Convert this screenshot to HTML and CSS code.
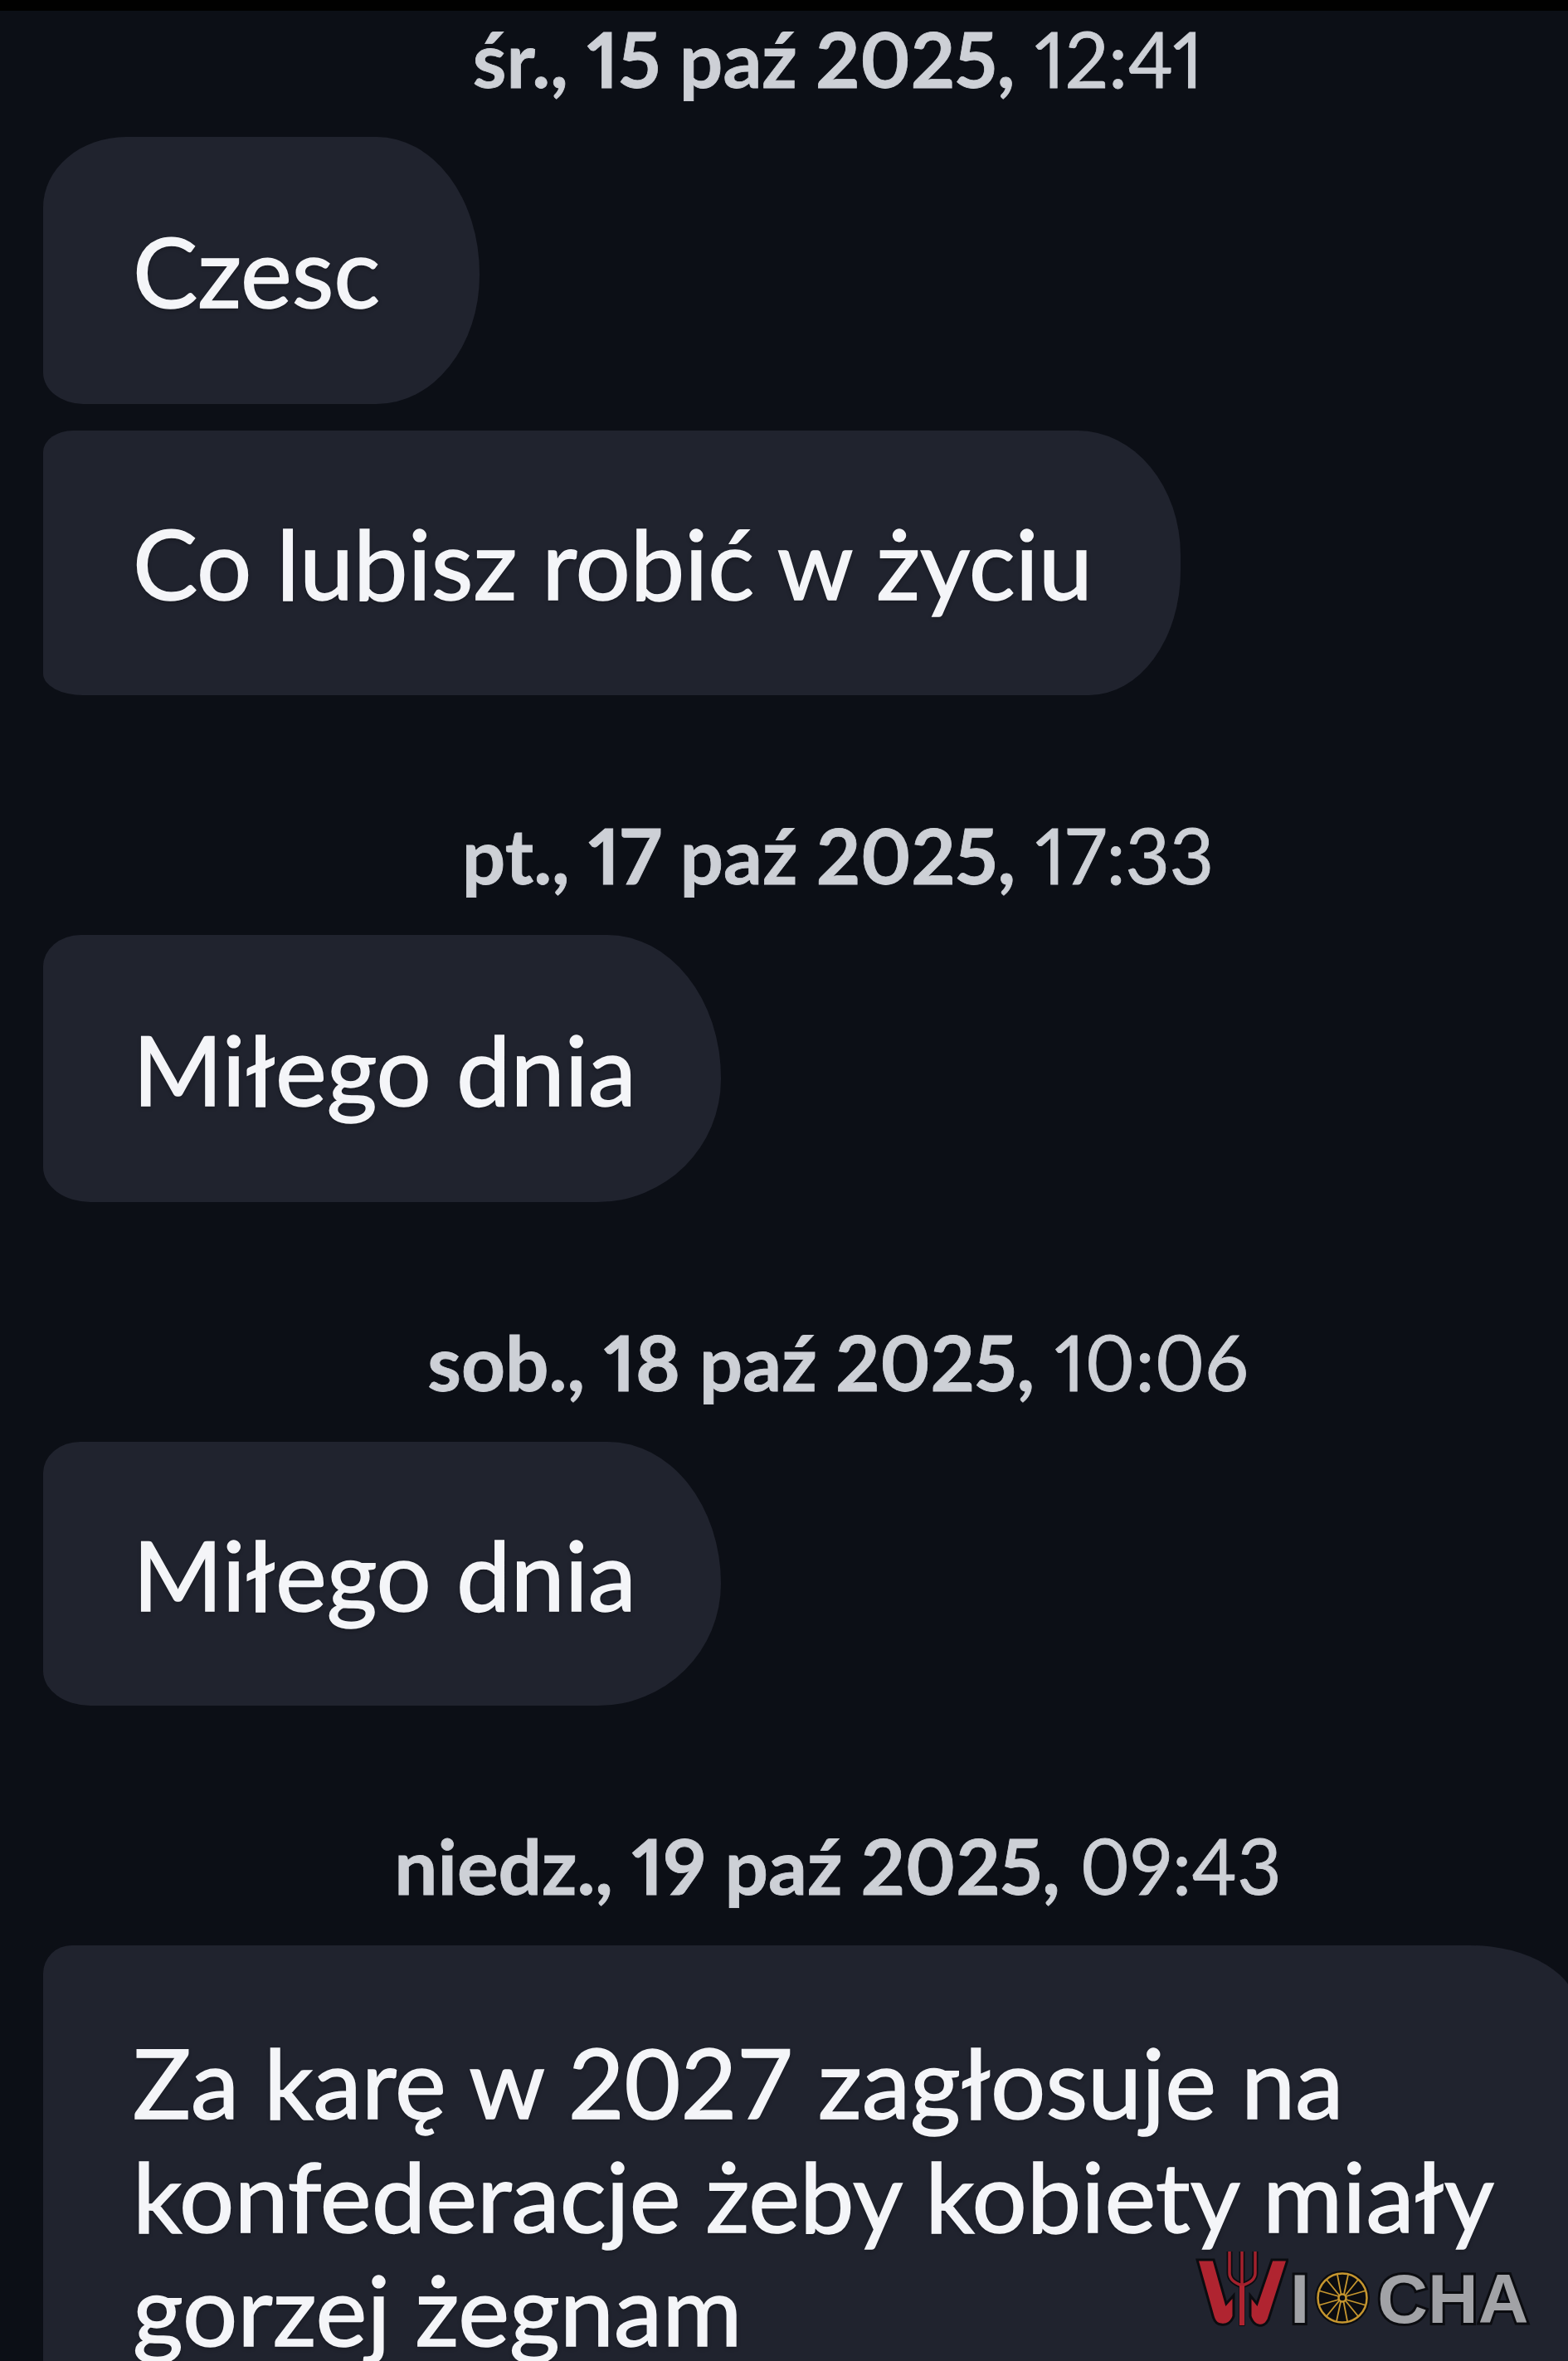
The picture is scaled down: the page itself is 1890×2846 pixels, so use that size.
FILE: index.html
```html
<!DOCTYPE html>
<html lang="pl">
<head>
<meta charset="utf-8">
<title>Wiadomości</title>
<link rel="stylesheet" href="styles.css">
</head>
<body>
<div class="screen">
  <div class="topbar"></div>
  <main class="chat">
    <p class="stamp stamp-first"><b>śr., 15 paź 2025,</b> 12:41</p>
    <div class="bubble bubble-greet">Czesc</div>
    <div class="bubble bubble-follow">Co lubisz robić w życiu</div>
    <p class="stamp"><b>pt., 17 paź 2025,</b> 17:33</p>
    <div class="bubble bubble-day">Miłego dnia</div>
    <p class="stamp"><b>sob., 18 paź 2025,</b> 10:06</p>
    <div class="bubble bubble-day bubble-day-low">Miłego dnia</div>
    <p class="stamp"><b>niedz., 19 paź 2025,</b> 09:43</p>
    <div class="bubble bubble-long">Za karę w 2027 zagłosuje na konfederacje żeby kobiety miały gorzej żegnam</div>
  </main>
  <div class="logo">
    <svg class="logo-w" viewBox="0 0 113 93" aria-hidden="true">
      <path class="w-blade" d="M3 12 L23 12 L38 65 L47 55 L47 80 C44 88 38 91 32 90 C27 90 24 87 22 80 Z"/>
      <path class="w-blade" d="M93 12 L112 12 L89 84 C86 90 81 92 77 91 C72 90 69 86 67 80 L67 55 L75 65 Z"/>
      <path class="w-fork-bg" d="M42 2 V28 Q42 38 57 43 Q73 38 73 28 V2 M57 2 V92"/>
      <path class="w-fork" d="M42 2 V28 Q42 38 57 43 Q73 38 73 28 V2 M57 2 V43"/>
      <path class="w-handle" d="M57 43 V91"/>
    </svg>
    <span class="logo-text logo-i">I</span>
    <svg class="logo-wheel" viewBox="0 0 66 66" aria-hidden="true">
      <circle class="wheel-bg" cx="33" cy="33" r="33"/>
      <circle class="wheel-rim" cx="33" cy="33" r="29.500"/>
      <circle class="wheel-hub" cx="33" cy="33" r="4.500"/>
      <path class="wheel-spokes" d="M27 5L31.500 28.500M34.500 37.500L39 61M40 5L35 28.500M31 37.500L26 61M14 11L29.500 30M36.500 36L52 55M52 11L36.500 30M29.500 36L14 55M4 24L28.500 31M37.500 35L62 42M62 24L37.500 31M28.500 35L4 42"/>
    </svg>
    <span class="logo-text logo-cha">CHA</span>
  </div>
</div>
</body>
</html>
```
FILE: styles.css
```css
html, body {
  margin: 0;
  padding: 0;
  background: #0c0f16;
}
.screen {
  position: relative;
  width: 1890px;
  height: 2846px;
  overflow: hidden;
  background: #0c0f16;
  font-family: Lato, "Noto Sans", sans-serif;
}
.topbar {
  height: 13px;
  background: #010101;
}
.chat {
  display: flex;
  flex-direction: column;
  align-items: flex-start;
  padding-left: 52px;
}
.stamp {
  align-self: stretch;
  margin: 143px 0 46px;
  height: 100px;
  line-height: 100px;
  padding-left: 78px;
  text-align: center;
  font-size: 92.500px;
  font-weight: 400;
  font-feature-settings: "pnum";
  color: #cdd0d6;
  white-space: nowrap;
  -webkit-text-stroke: 0.8px #cdd0d6;
}
.stamp b {
  font-weight: 700;
}
.stamp-first {
  margin-top: 8px;
  margin-bottom: 44px;
}
.bubble {
  box-sizing: border-box;
  display: flex;
  align-items: center;
  height: 322px;
  padding: 0 102px 0 108px;
  background: #20232e;
  color: #f4f5f8;
  font-size: 117px;
  line-height: 137px;
  -webkit-text-stroke: 1.5px #f4f5f8;
  text-shadow: 0 2px 5px rgba(0, 0, 0, 0.35);
}
.bubble-greet {
  padding-right: 120px;
  border-radius: 100px 124px 124px 48px / 85px 165px 155px 38px;
}
.bubble-follow {
  margin-top: 32px;
  height: 319px;
  padding-right: 106px;
  border-radius: 36px 124px 110px 48px / 26px 150px 150px 26px;
}
.bubble-day {
  border-radius: 45px 137px 149px 57px / 38px 172px 148px 42px;
}
.bubble-day-low {
  height: 318px;
}
.bubble-long {
  display: block;
  height: 520px;
  width: 1850px;
  padding: 96px 80px 0 108px;
  border-radius: 34px 130px 0 0 / 34px 80px 0 0;
}
.logo {
  position: absolute;
  left: 1440px;
  top: 2712px;
  display: flex;
  align-items: flex-end;
}
.logo-w {
  width: 113px;
  height: 93px;
}
.logo-text {
  font-family: "Liberation Sans", sans-serif;
  font-size: 84px;
  font-weight: 700;
  line-height: 68px;
  color: #a1a2a6;
  -webkit-text-stroke: 6px #0b0c10;
  paint-order: stroke fill;
  text-shadow: none;
}
.logo-i {
  margin-left: 2px;
}
.logo-wheel {
  width: 66px;
  height: 66px;
  margin: 0 0 2px 7px;
}
.logo-cha {
  margin-left: 9px;
}
.w-blade {
  fill: #b02430;
  stroke: #0b0c10;
  stroke-width: 3;
}
.w-fork-bg {
  fill: none;
  stroke: #0b0c10;
  stroke-width: 7;
}
.w-fork {
  fill: none;
  stroke: #a3212d;
  stroke-width: 3.500;
}
.w-handle {
  fill: none;
  stroke: #b02430;
  stroke-width: 6;
}
.wheel-bg {
  fill: #0b0c10;
}
.wheel-rim, .wheel-hub {
  fill: none;
  stroke: #c6962f;
  stroke-width: 2.500;
}
.wheel-spokes {
  fill: none;
  stroke: #c6962f;
  stroke-width: 1.800;
}
```
